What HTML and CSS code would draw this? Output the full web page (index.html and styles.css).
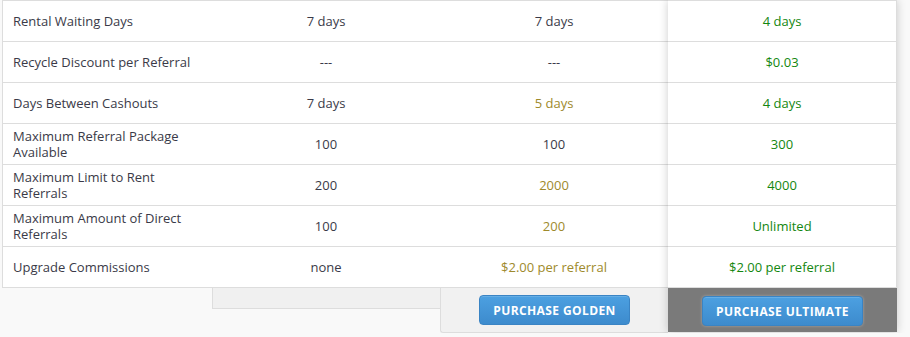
FILE: index.html
```html
<!DOCTYPE html>
<html>
<head>
<meta charset="utf-8">
<link rel="stylesheet" href="styles.css">
</head>
<body>
<div class="compare">
  <div class="col col-label">
    <div class="cell label">Rental Waiting Days</div>
    <div class="cell label">Recycle Discount per Referral</div>
    <div class="cell label">Days Between Cashouts</div>
    <div class="cell label">Maximum Referral Package Available</div>
    <div class="cell label">Maximum Limit to Rent Referrals</div>
    <div class="cell label">Maximum Amount of Direct Referrals</div>
    <div class="cell label">Upgrade Commissions</div>
  </div>
  <div class="col col-std">
    <div class="cell val">7 days</div>
    <div class="cell val">---</div>
    <div class="cell val">7 days</div>
    <div class="cell val">100</div>
    <div class="cell val">200</div>
    <div class="cell val">100</div>
    <div class="cell val">none</div>
    <div class="foot foot-std"></div>
  </div>
  <div class="col col-golden">
    <div class="cell val">7 days</div>
    <div class="cell val">---</div>
    <div class="cell val gold">5 days</div>
    <div class="cell val">100</div>
    <div class="cell val gold">2000</div>
    <div class="cell val gold">200</div>
    <div class="cell val gold">$2.00 per referral</div>
    <div class="foot foot-golden"><button class="btn">PURCHASE GOLDEN</button></div>
  </div>
  <div class="col col-ult">
    <div class="cell val green">4 days</div>
    <div class="cell val green">$0.03</div>
    <div class="cell val green">4 days</div>
    <div class="cell val green">300</div>
    <div class="cell val green">4000</div>
    <div class="cell val green">Unlimited</div>
    <div class="cell val green">$2.00 per referral</div>
    <div class="foot foot-ult"><button class="btn btn-ult">PURCHASE ULTIMATE</button></div>
  </div>
</div>
</body>
</html>
```

FILE: styles.css
```css
html, body {
  margin: 0;
  padding: 0;
  background: #f9f9f9;
}
body {
  padding-left: 2px;
  font-family: "Open Sans", "Liberation Sans", sans-serif;
  font-size: 13px;
  color: #3a3a48;
}
.compare {
  display: flex;
  align-items: flex-start;
}
.col {
  display: flex;
  flex-direction: column;
}
.col-label { width: 210px; }
.col-std { width: 228px; }
.col-golden { width: 228px; }
.col-ult {
  width: 229px;
  position: relative;
  z-index: 1;
  box-shadow: 0 0 9px rgba(0,0,0,0.2);
}
.cell {
  box-sizing: border-box;
  background: #fff;
  height: 41px;
  border-bottom: 1px solid #dddddd;
  display: flex;
  align-items: center;
  line-height: 16px;
}
.cell:first-child {
  height: 42px;
  border-top: 1px solid #dddddd;
}
.col-label .cell {
  border-left: 1px solid #dddddd;
  padding-left: 10px;
  padding-right: 12px;
}
.col-ult .cell {
  border-right: 1px solid #dddddd;
}
.val {
  justify-content: center;
  text-align: center;
}
.green { color: #14870f; }
.gold { color: #9e8a2c; }

.foot {
  box-sizing: border-box;
}
.foot-std {
  height: 21px;
  background: #f0f0f0;
  border-left: 1px solid #dddddd;
  border-bottom: 1px solid #dddddd;
}
.foot-golden {
  background: #f1f1f1;
  border-left: 1px solid #dddddd;
  border-bottom: 1px solid #dddddd;
  border-bottom-left-radius: 3px;
  padding: 7px 0;
  display: flex;
  justify-content: center;
}
.foot-ult {
  background: #7a7a7a;
  padding: 8px 0 6px;
  display: flex;
  justify-content: center;
}
.btn {
  font-family: "Open Sans", "Liberation Sans", sans-serif;
  font-weight: 700;
  font-size: 12px;
  letter-spacing: 0.4px;
  color: #fff;
  height: 30px;
  padding: 0 13px;
  border: 1px solid #3a84c4;
  border-radius: 4px;
  background: linear-gradient(#4ca0e1, #3d8bcd);
  box-shadow: inset 0 1px 0 rgba(255,255,255,0.15);
  cursor: pointer;
}
.btn-ult {
  box-shadow: 0 0 3px rgba(255,255,255,0.35), inset 0 1px 0 rgba(255,255,255,0.15);
}
```
